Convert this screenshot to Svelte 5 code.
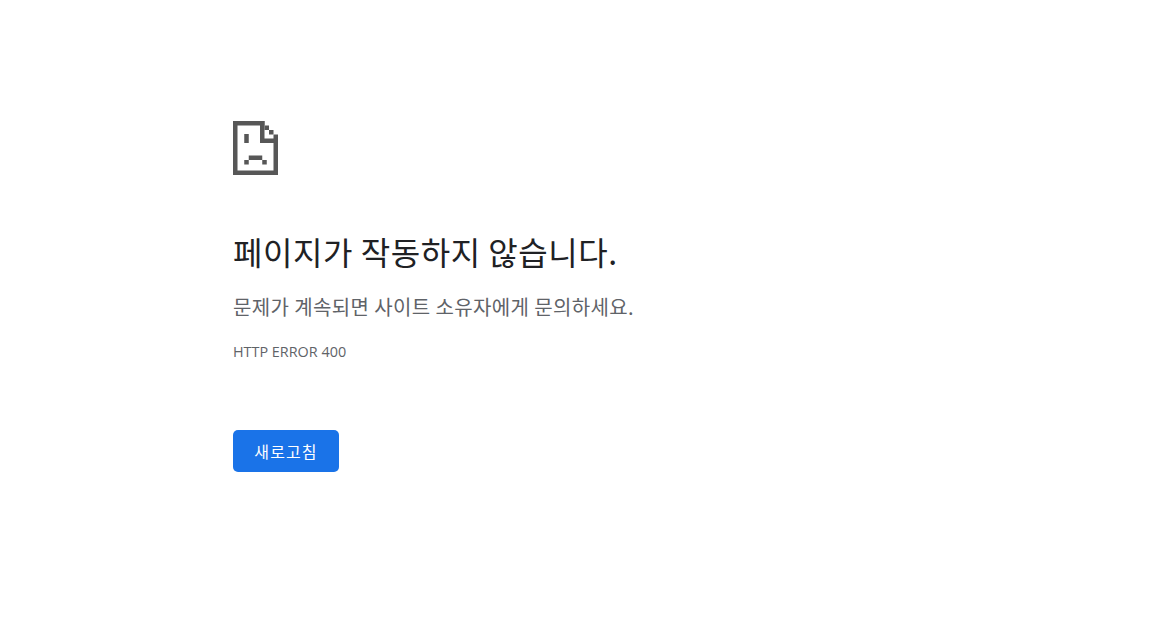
<script>
  const title = '페이지가 작동하지 않습니다.';
  const message = '문제가 계속되면 사이트 소유자에게 문의하세요.';
  const code = 'HTTP ERROR 400';
  const pixels = [
    [0, 0, 31.5, 4.5],
    [0, 0, 4.5, 54],
    [0, 49.5, 45, 4.5],
    [40.5, 13.5, 4.5, 40.5],
    [27, 0, 4.5, 22],
    [27, 17.5, 18, 4.5],
    [31.5, 4.5, 4.5, 4.5],
    [36, 9, 4.5, 4.5],
    [11.25, 13, 4.5, 9],
    [15.75, 34.5, 13.5, 4.5],
    [11.25, 39, 4.5, 4.5],
    [29.25, 39, 4.5, 4.5]
  ];
</script>

<main class="page">
  <div class="interstitial">
    <svg class="icon" width="45" height="54" viewBox="0 0 45 54" aria-hidden="true">
      {#each pixels as [x, y, width, height]}
        <rect {x} {y} {width} {height} fill="#575757" />
      {/each}
    </svg>
    <h1>{title}</h1>
    <p class="message">{message}</p>
    <p class="code">{code}</p>
    <button type="button">새로고침</button>
  </div>
</main>

<style>
  :global(body) {
    background: #fff;
  }

  .page {
    font-family: "Noto Sans CJK KR", "Open Sans", sans-serif;
    height: 633px;
    overflow: hidden;
  }

  .interstitial {
    width: 700px;
    margin-left: 233px;
    padding-top: 121px;
  }

  .icon {
    display: block;
  }

  h1 {
    margin: 52px 0 0;
    font-size: 32px;
    letter-spacing: 0.55px;
    line-height: 48px;
    font-weight: 400;
    color: #202124;
  }

  .message {
    margin: 18px 0 0;
    font-size: 20px;
    letter-spacing: 0.38px;
    line-height: 28px;
    color: #5f6368;
  }

  .code {
    margin: 21px 0 0;
    font-family: "Open Sans", sans-serif;
    font-size: 14.4px;
    line-height: 20px;
    color: #5f6368;
  }

  button {
    display: block;
    width: 106px;
    height: 42px;
    margin-top: 68px;
    padding: 0;
    border: 0;
    border-radius: 5px;
    background: #1a73e8;
    color: #fff;
    font-family: inherit;
    font-size: 16px;
    letter-spacing: 1.1px;
  }
</style>
